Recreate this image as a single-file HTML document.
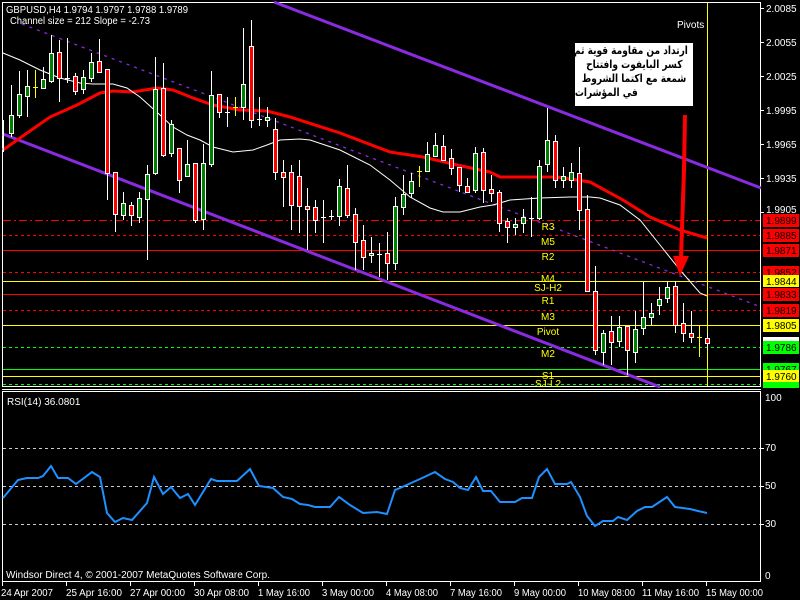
<!DOCTYPE html>
<html><head><meta charset="utf-8"><style>
html,body{margin:0;padding:0;background:#000;width:800px;height:600px;overflow:hidden;position:relative}
svg{display:block}
text{font-family:"Liberation Sans",sans-serif;font-size:10px}
.w{fill:#fff}.y{fill:#ff0}
.g{fill:#008000;stroke:#fff;stroke-width:1}
.r{fill:#f00;stroke:#fff;stroke-width:1}
.note{position:absolute;left:575px;top:43px;width:118px;height:63px;background:#fff;overflow:hidden}
.note div{position:absolute;direction:rtl;white-space:nowrap;font-family:"DejaVu Sans",sans-serif;font-weight:bold;font-size:11px;line-height:14px;color:#000;transform:scaleX(0.82);transform-origin:right center}
</style></head><body>
<svg width="800" height="600" viewBox="0 0 800 600" xmlns="http://www.w3.org/2000/svg" shape-rendering="crispEdges">
<rect width="800" height="600" fill="#000"/>
<rect x="2.5" y="2.5" width="758" height="384" fill="none" stroke="#fff"/>
<line x1="2" y1="389.5" x2="761" y2="389.5" stroke="#fff"/>
<rect x="2.5" y="391.5" width="758" height="190" fill="none" stroke="#fff"/>

<g stroke-width="1">
<line x1="3" y1="220.5" x2="760" y2="220.5" stroke="#f00" stroke-dasharray="8,3,2,3"/>
<line x1="3" y1="235.5" x2="760" y2="235.5" stroke="#f00" stroke-dasharray="3,3"/>
<line x1="3" y1="250.5" x2="760" y2="250.5" stroke="#f00"/>
<line x1="3" y1="272.5" x2="760" y2="272.5" stroke="#f00" stroke-dasharray="3,3"/>
<line x1="3" y1="281.5" x2="760" y2="281.5" stroke="#ff0"/>
<line x1="3" y1="294.5" x2="760" y2="294.5" stroke="#f00"/>
<line x1="3" y1="310.5" x2="760" y2="310.5" stroke="#f00" stroke-dasharray="3,3"/>
<line x1="3" y1="325.5" x2="760" y2="325.5" stroke="#ff0"/>
<line x1="3" y1="347.5" x2="760" y2="347.5" stroke="#0f0" stroke-dasharray="3,3"/>
<line x1="3" y1="369.5" x2="760" y2="369.5" stroke="#0f0"/>
<line x1="3" y1="376.5" x2="760" y2="376.5" stroke="#ff0"/>
<line x1="3" y1="384.5" x2="760" y2="384.5" stroke="#0f0" stroke-dasharray="3,3"/>
<line x1="707.5" y1="3" x2="707.5" y2="386" stroke="#ff0"/>
</g>

<g shape-rendering="auto">
<line x1="274" y1="2" x2="761" y2="188" stroke="#8a2be2" stroke-width="3"/>
<line x1="3" y1="134" x2="660" y2="387" stroke="#8a2be2" stroke-width="3"/>
<line x1="22" y1="24" x2="761" y2="307" stroke="#8a2be2" stroke-width="1.3" stroke-dasharray="3,5"/>
<polyline fill="none" stroke="#f00" stroke-width="3" points="3,150 20,138 50,117 77,105 100,93 113,91 133,92 157,88 173,90 193,98 213,105 240,110 267,111 290,117 340,133 390,152 423,157 457,165 490,172 500,177 557,177 590,182 623,200 650,217 680,230 707,238"/>
<polyline fill="none" stroke="#fff" stroke-width="1" points="3,53 20,60 40,70 60,78 80,83 93,84 113,84 127,88 140,97 160,115 173,127 187,135 200,140 213,147 233,152 253,150 267,145 280,140 300,139 310,140 340,150 370,165 390,180 410,197 430,208 443,212 460,212 480,207 493,205 510,200 540,198 570,197 590,197 600,198 620,205 640,220 660,245 680,270 700,293 707,296"/>
</g>

<path stroke="#fff" fill="none" d="M3.5 120V152M11.5 85V137M19.5 71V118M27.5 70V117M43.5 67V89M51.5 35V83M59.5 40V102M67.5 38V83M75.5 73V95M83.5 70V94M91.5 53V82M99.5 39V73M107.5 69V200M115.5 172V232M123.5 192V220M131.5 202V226M139.5 192V223M147.5 165V260M155.5 57V175M163.5 63V157M171.5 120V157M179.5 148V193M187.5 140V177M195.5 163V223M203.5 144V230M211.5 71V167M219.5 94V118M227.5 97V127M243.5 28V120M251.5 20V128M259.5 97V126M267.5 107V127M275.5 118V180M283.5 160V207M291.5 165V230M299.5 160V233M307.5 188V250M315.5 200V233M323.5 200V243M331.5 210V220M339.5 179V226M347.5 165V218M355.5 208V270M363.5 225V270M371.5 237V263M379.5 243V277M387.5 232V280M395.5 197V270M403.5 175V215M411.5 173V198M427.5 142V172M435.5 133V157M443.5 135V160M451.5 149V175M459.5 167V192M467.5 178V192M475.5 147V193M483.5 148V203M491.5 175V202M499.5 190V232M507.5 218V243M515.5 218V235M523.5 209V233M531.5 197V237M539.5 160V220M547.5 108V172M555.5 135V188M563.5 167V188M571.5 163V188M579.5 147V230M587.5 195V292M595.5 266V355M603.5 330V365M611.5 316V365M619.5 316V347M627.5 326V375M635.5 311V363M643.5 282V335M651.5 303V325M659.5 287V315M667.5 281V303M675.5 281V333M683.5 303V342M691.5 311V343M707.5 333V350"/>
<path stroke="#ff0" fill="none" d="M35.5 70V98M33 87.5H38M235.5 97V116M233 107.5H238M419.5 166V187M417 171.5H422M699.5 325V357M697 337.5H702"/>
<path stroke="#fff" fill="none" d="M65 78.5H70M225 112.5H230M257 119.5H262M321 217.5H326M329 216.5H334M377 254.5H382M529 218.5H534"/>

<rect class="g" x="9.5" y="115.5" width="4" height="18"/>
<rect class="g" x="17.5" y="94.5" width="4" height="21"/>
<rect class="g" x="25.5" y="86.5" width="4" height="10"/>
<rect class="g" x="41.5" y="79.5" width="4" height="9"/>
<rect class="g" x="49.5" y="53.5" width="4" height="28"/>
<rect class="r" x="57.5" y="52.5" width="4" height="26"/>
<rect class="r" x="73.5" y="76.5" width="4" height="15"/>
<rect class="g" x="81.5" y="77.5" width="4" height="12"/>
<rect class="g" x="89.5" y="62.5" width="4" height="16"/>
<rect class="r" x="97.5" y="61.5" width="4" height="11"/>
<rect class="r" x="105.5" y="69.5" width="4" height="104"/>
<rect class="r" x="113.5" y="172.5" width="4" height="42"/>
<rect class="g" x="121.5" y="203.5" width="4" height="12"/>
<rect class="r" x="129.5" y="205.5" width="4" height="10"/>
<rect class="g" x="137.5" y="198.5" width="4" height="19"/>
<rect class="g" x="145.5" y="174.5" width="4" height="25"/>
<rect class="g" x="153.5" y="89.5" width="4" height="84"/>
<rect class="r" x="161.5" y="88.5" width="4" height="67"/>
<rect class="g" x="169.5" y="124.5" width="4" height="29"/>
<rect class="r" x="177.5" y="148.5" width="4" height="32"/>
<rect class="g" x="185.5" y="164.5" width="4" height="12"/>
<rect class="r" x="193.5" y="163.5" width="4" height="57"/>
<rect class="g" x="201.5" y="163.5" width="4" height="56"/>
<rect class="g" x="209.5" y="95.5" width="4" height="69"/>
<rect class="r" x="217.5" y="94.5" width="4" height="18"/>
<rect class="g" x="241.5" y="84.5" width="4" height="23"/>
<rect class="r" x="249.5" y="46.5" width="4" height="74"/>
<rect class="g" x="265.5" y="117.5" width="4" height="3"/>
<rect class="r" x="273.5" y="129.5" width="4" height="43"/>
<rect class="r" x="281.5" y="172.5" width="4" height="5"/>
<rect class="r" x="289.5" y="172.5" width="4" height="33"/>
<rect class="r" x="297.5" y="176.5" width="4" height="30"/>
<rect class="r" x="305.5" y="206.5" width="4" height="3"/>
<rect class="r" x="313.5" y="207.5" width="4" height="13"/>
<rect class="g" x="337.5" y="186.5" width="4" height="30"/>
<rect class="r" x="345.5" y="188.5" width="4" height="27"/>
<rect class="r" x="353.5" y="214.5" width="4" height="28"/>
<rect class="r" x="361.5" y="240.5" width="4" height="17"/>
<rect class="g" x="369.5" y="253.5" width="4" height="2"/>
<rect class="r" x="385.5" y="253.5" width="4" height="10"/>
<rect class="g" x="393.5" y="206.5" width="4" height="57"/>
<rect class="g" x="401.5" y="194.5" width="4" height="13"/>
<rect class="g" x="409.5" y="181.5" width="4" height="12"/>
<rect class="g" x="425.5" y="154.5" width="4" height="17"/>
<rect class="g" x="433.5" y="145.5" width="4" height="11"/>
<rect class="r" x="441.5" y="146.5" width="4" height="14"/>
<rect class="r" x="449.5" y="158.5" width="4" height="10"/>
<rect class="r" x="457.5" y="167.5" width="4" height="18"/>
<rect class="r" x="465.5" y="186.5" width="4" height="6"/>
<rect class="g" x="473.5" y="153.5" width="4" height="37"/>
<rect class="r" x="481.5" y="152.5" width="4" height="38"/>
<rect class="r" x="489.5" y="189.5" width="4" height="4"/>
<rect class="r" x="497.5" y="192.5" width="4" height="31"/>
<rect class="r" x="505.5" y="221.5" width="4" height="6"/>
<rect class="g" x="513.5" y="224.5" width="4" height="3"/>
<rect class="g" x="521.5" y="217.5" width="4" height="6"/>
<rect class="g" x="537.5" y="166.5" width="4" height="52"/>
<rect class="g" x="545.5" y="140.5" width="4" height="24"/>
<rect class="r" x="553.5" y="141.5" width="4" height="39"/>
<rect class="g" x="561.5" y="176.5" width="4" height="4"/>
<rect class="g" x="569.5" y="172.5" width="4" height="8"/>
<rect class="r" x="577.5" y="173.5" width="4" height="37"/>
<rect class="r" x="585.5" y="209.5" width="4" height="82"/>
<rect class="r" x="593.5" y="291.5" width="4" height="59"/>
<rect class="g" x="601.5" y="333.5" width="4" height="19"/>
<rect class="r" x="609.5" y="331.5" width="4" height="11"/>
<rect class="g" x="617.5" y="327.5" width="4" height="14"/>
<rect class="r" x="625.5" y="326.5" width="4" height="24"/>
<rect class="g" x="633.5" y="329.5" width="4" height="23"/>
<rect class="g" x="641.5" y="317.5" width="4" height="11"/>
<rect class="g" x="649.5" y="313.5" width="4" height="4"/>
<rect class="g" x="657.5" y="299.5" width="4" height="6"/>
<rect class="g" x="665.5" y="287.5" width="4" height="11"/>
<rect class="r" x="673.5" y="286.5" width="4" height="39"/>
<rect class="r" x="681.5" y="323.5" width="4" height="10"/>
<rect class="r" x="689.5" y="333.5" width="4" height="4"/>
<rect class="r" x="705.5" y="338.5" width="4" height="5"/>

<g shape-rendering="auto">
<path d="M685 115 L684 170 L681 258" stroke="#f00" stroke-width="4" fill="none"/>
<polygon points="673,256 689,256 680,276" fill="#f00"/>
</g>

<text x="6" y="13" class="w" textLength="182" lengthAdjust="spacingAndGlyphs">GBPUSD,H4  1.9794 1.9797 1.9788 1.9789</text>
<text x="10" y="24" class="w" textLength="140" lengthAdjust="spacingAndGlyphs">Channel size = 212 Slope = -2.73</text>
<text x="677" y="28" class="w">Pivots</text>

<g class="y" text-anchor="middle">
<text x="548" y="230">R3</text>
<text x="548" y="245">M5</text>
<text x="548" y="260">R2</text>
<text x="548" y="282">M4</text>
<text x="548" y="291">SJ-H2</text>
<text x="548" y="304">R1</text>
<text x="548" y="320">M3</text>
<text x="548" y="335">Pivot</text>
<text x="548" y="357">M2</text>
<text x="548" y="379">S1</text>
<text x="548" y="387">SJ-L2</text>
</g>

<g stroke="#fff"><path d="M761 8.5h3M761 42.5h3M761 76.5h3M761 110.5h3M761 144.5h3M761 178.5h3M761 212.5h3"/></g>
<g class="w">
<text x="766" y="12">2.0085</text>
<text x="766" y="46">2.0055</text>
<text x="766" y="80">2.0025</text>
<text x="766" y="114">1.9995</text>
<text x="766" y="148">1.9965</text>
<text x="766" y="182">1.9935</text>
<text x="766" y="213">1.9905</text>
</g>
<rect x="763" y="214" width="36" height="13" fill="#f00"/><text x="766" y="224" fill="#000">1.9899</text>
<rect x="763" y="229" width="36" height="13" fill="#f00"/><text x="766" y="239" fill="#000">1.9885</text>
<rect x="763" y="244" width="36" height="13" fill="#f00"/><text x="766" y="254" fill="#000">1.9871</text>
<rect x="763" y="266" width="36" height="13" fill="#f00"/><text x="766" y="276" fill="#000">1.9852</text>
<rect x="763" y="275" width="36" height="12" fill="#ff0"/><text x="766" y="285" fill="#000">1.9844</text>
<rect x="763" y="288" width="36" height="13" fill="#f00"/><text x="766" y="298" fill="#000">1.9833</text>
<rect x="763" y="304" width="36" height="13" fill="#f00"/><text x="766" y="314" fill="#000">1.9819</text>
<rect x="763" y="319" width="36" height="13" fill="#ff0"/><text x="766" y="329" fill="#000">1.9805</text>
<rect x="763" y="337" width="36" height="5" fill="#fff"/>
<rect x="763" y="341" width="36" height="13" fill="#0f0"/><text x="766" y="351" fill="#000">1.9786</text>
<rect x="763" y="363" width="36" height="13" fill="#0f0"/><text x="766" y="373" fill="#000">1.9767</text>
<rect x="763" y="370" width="36" height="12" fill="#ff0"/><text x="766" y="380" fill="#000">1.9760</text>
<rect x="763" y="382" width="36" height="6" fill="#0f0"/>

<g stroke="#ccc" stroke-dasharray="3,3">
<line x1="3" y1="448.5" x2="760" y2="448.5"/>
<line x1="3" y1="486.5" x2="760" y2="486.5"/>
<line x1="3" y1="524.5" x2="760" y2="524.5"/>
</g>
<polyline shape-rendering="auto" fill="none" stroke="#1e90ff" stroke-width="2" points="3,498 18,480 27,478 38,478 43,476 51,466 58,478 68,478 76,484 92,472 100,477 107,513 115,522 123,518 132,520 147,503 154,477 163,494 171,487 180,498 188,494 195,505 211,479 217,481 237,481 250,469 259,486 273,488 283,497 292,499 300,504 308,505 315,507 330,507 339,497 350,505 363,513 377,512 387,514 395,490 400,488 420,479 435,472 445,479 453,482 460,488 468,490 476,477 483,491 491,491 500,502 515,502 522,498 532,498 539,477 547,469 555,484 567,484 571,482 580,497 587,516 595,526 603,521 613,521 618,517 627,520 637,511 645,507 652,507 667,497 675,507 690,509 698,511 707,513"/>
<text x="7" y="405" class="w">RSI(14) 36.0801</text>
<text x="6" y="578" class="w" textLength="264" lengthAdjust="spacingAndGlyphs">Windsor Direct 4, © 2001-2007 MetaQuotes Software Corp.</text>
<g stroke="#fff"><path d="M761 448.5h3M761 486.5h3M761 524.5h3"/></g>
<g class="w">
<text x="765" y="401">100</text>
<text x="765" y="451">70</text>
<text x="765" y="489">50</text>
<text x="765" y="527">30</text>
<text x="765" y="579">0</text>
</g>

<g stroke="#fff"><path d="M2.5 582v4M66.5 582v4M130.5 582v4M194.5 582v4M258.5 582v4M322.5 582v4M386.5 582v4M450.5 582v4M514.5 582v4M578.5 582v4M642.5 582v4M706.5 582v4"/></g>
<g class="w">
<text x="1" y="596" textLength="52" lengthAdjust="spacingAndGlyphs">24 Apr 2007</text>
<text x="66" y="596" textLength="56" lengthAdjust="spacingAndGlyphs">25 Apr 16:00</text>
<text x="130" y="596" textLength="55" lengthAdjust="spacingAndGlyphs">27 Apr 00:00</text>
<text x="194" y="596" textLength="55" lengthAdjust="spacingAndGlyphs">30 Apr 08:00</text>
<text x="258" y="596" textLength="52" lengthAdjust="spacingAndGlyphs">1 May 16:00</text>
<text x="322" y="596" textLength="52" lengthAdjust="spacingAndGlyphs">3 May 00:00</text>
<text x="386" y="596" textLength="52" lengthAdjust="spacingAndGlyphs">4 May 08:00</text>
<text x="450" y="596" textLength="52" lengthAdjust="spacingAndGlyphs">7 May 16:00</text>
<text x="514" y="596" textLength="52" lengthAdjust="spacingAndGlyphs">9 May 00:00</text>
<text x="578" y="596" textLength="57" lengthAdjust="spacingAndGlyphs">10 May 08:00</text>
<text x="642" y="596" textLength="57" lengthAdjust="spacingAndGlyphs">11 May 16:00</text>
<text x="706" y="596" textLength="57" lengthAdjust="spacingAndGlyphs">15 May 00:00</text>
</g>
</svg>
<div class="note">
<div style="right:5px;top:1px">ارتداد من مقاومة قوية ثم</div>
<div style="right:11px;top:15px">كسر البايفوت وافتتاح</div>
<div style="right:7px;top:29px">شمعة مع اكتما الشروط</div>
<div style="right:55px;top:43px">في المؤشرات</div>
</div>
</body></html>
